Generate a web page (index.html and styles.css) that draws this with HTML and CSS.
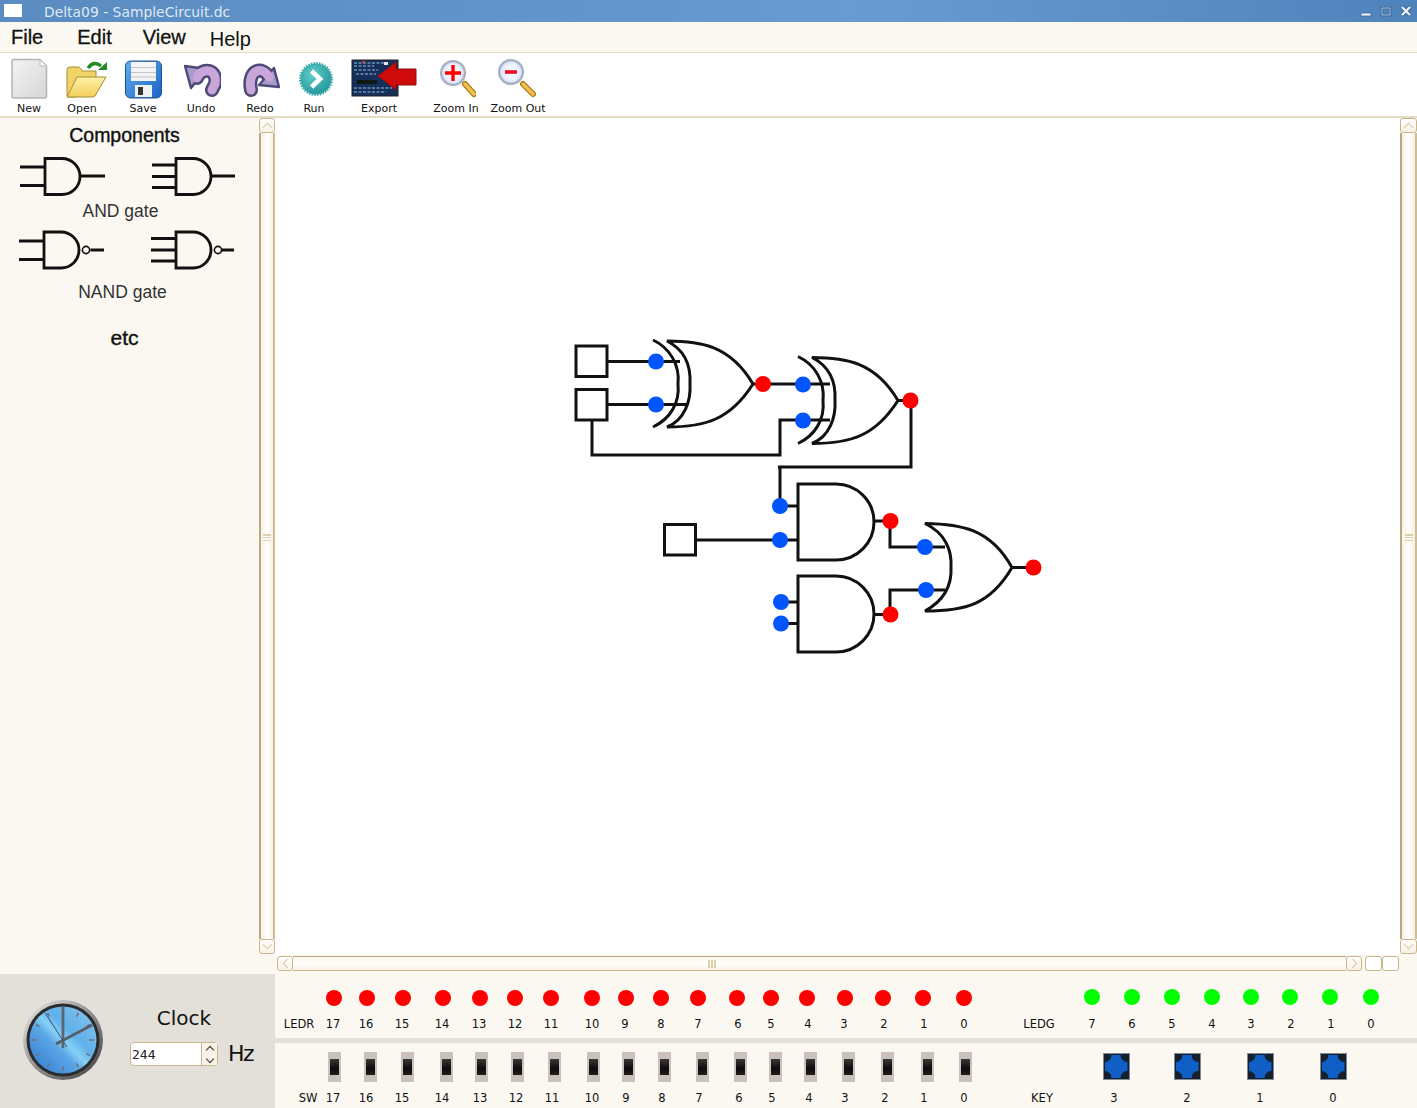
FILE: index.html
```html
<!DOCTYPE html>
<html lang="en">
<head>
  <meta charset="UTF-8" />
  <title>Delta09 - SampleCircuit.dc</title>
  <link rel="stylesheet" href="styles.css">
</head>
<body>
  <div class="titlebar">
    <span class="win-icon"></span>
    <span class="win-title">Delta09 - SampleCircuit.dc</span>
    <svg class="win-buttons" width="60" height="22" viewBox="1357 0 60 22">
      <rect x="1361" y="13" width="10" height="3" rx="1" fill="#e8eef6" stroke="#34618f" stroke-width=".7"/>
      <rect x="1382" y="8" width="8" height="7" fill="none" stroke="#2f5f90" stroke-width="2.6"/>
      <rect x="1382" y="8" width="8" height="7" fill="none" stroke="#d5e2f0" stroke-width=".8"/>
      <path d="M1402 7l8 8M1410 7l-8 8" stroke="#34618f" stroke-width="4"/>
      <path d="M1402 7l8 8M1410 7l-8 8" stroke="#eef3f9" stroke-width="2.4"/>
    </svg>
  </div>

  <div class="menubar">
    <span class="menu-item">File</span>
    <span class="menu-item">Edit</span>
    <span class="menu-item">View</span>
    <span class="menu-item help">Help</span>
  </div>

  <div class="toolbar">
    <div class="tool">
      <svg width="40" height="43" viewBox="9 58 40 43">
        <defs>
          <linearGradient id="paper" x1="0" y1="0" x2="1" y2="1"><stop offset="0" stop-color="#f3f3f3"/><stop offset="1" stop-color="#d6d6d6"/></linearGradient>
        </defs>
        <path d="M14 59.500H40L46.500 66V96a2 2 0 0 1-2 2H14a2 2 0 0 1-2-2V61.500a2 2 0 0 1 2-2Z" fill="url(#paper)" stroke="#b4b4b4" stroke-width="1.500"/>
        <path d="M40 59.500V66H46.500Z" fill="#fff" stroke="#bbb"/>
      </svg>
      <span>New</span>
    </div>
    <div class="tool">
      <svg width="50" height="43" viewBox="57 58 50 43">
        <defs>
          <linearGradient id="folder" x1="0" y1="0" x2="0" y2="1"><stop offset="0" stop-color="#fff2a8"/><stop offset="1" stop-color="#f2cf58"/></linearGradient>
        </defs>
        <path d="M67 96V70q0-3 3-3h8q2 0 3 2l1 2h14v6L76 97H68Z" fill="#f0d468" stroke="#a88e36"/>
        <path d="M67 97L77 77H106L95 96Q94 97 92 97Z" fill="url(#folder)" stroke="#a88e36"/>
        <path d="M88 68Q94 60 101 66" fill="none" stroke="#1f8a1f" stroke-width="3.400"/>
        <path d="M98 70H107V62Z" fill="#1f8a1f"/>
      </svg>
      <span>Open</span>
    </div>
    <div class="tool">
      <svg width="40" height="43" viewBox="123 58 40 43">
        <defs>
          <linearGradient id="disk" x1="0" y1="0" x2="1" y2="1"><stop offset="0" stop-color="#5fb0f5"/><stop offset="1" stop-color="#1c62c4"/></linearGradient>
        </defs>
        <rect x="125.500" y="61" width="36" height="37" rx="5" fill="url(#disk)" stroke="#24508f"/>
        <rect x="131" y="62" width="25" height="19" fill="#f4f4f4"/>
        <path d="M131 67.500H156M131 72.500H156M131 77H156" stroke="#c4c4c4"/>
        <rect x="135" y="85" width="17" height="12" fill="#f0f0f0"/>
        <rect x="138" y="87" width="5" height="8" fill="#333"/>
      </svg>
      <span>Save</span>
    </div>
    <div class="tool">
      <svg width="40" height="43" viewBox="181 58 40 43">
        <path d="M197 78C201 67 218 68 215 84L212 90" fill="none" stroke="#4d4a78" stroke-width="14" stroke-linecap="round"/>
        <path d="M185 66L206 69L191 88Z" fill="#a99acb" stroke="#4d4a78" stroke-width="2.400" stroke-linejoin="round"/>
        <path d="M197 78C201 67 218 68 215 84L212 90" fill="none" stroke="#c9a6da" stroke-width="9" stroke-linecap="round"/>
      </svg>
      <span>Undo</span>
    </div>
    <div class="tool">
      <svg width="40" height="43" viewBox="240 58 40 43">
        <path d="M251 90C247 70 262 65 269 77" fill="none" stroke="#4d4a78" stroke-width="14" stroke-linecap="round"/>
        <path d="M279 87L274 68L259 85Z" fill="#a99acb" stroke="#4d4a78" stroke-width="2.400" stroke-linejoin="round"/>
        <path d="M251 90C247 70 262 65 269 77" fill="none" stroke="#c9a6da" stroke-width="9" stroke-linecap="round"/>
      </svg>
      <span>Redo</span>
    </div>
    <div class="tool">
      <svg width="44" height="43" viewBox="292 58 44 43">
        <defs>
          <radialGradient id="run" cx=".4" cy=".35" r=".75"><stop offset="0" stop-color="#62cfca"/><stop offset="1" stop-color="#1d9096"/></radialGradient>
        </defs>
        <circle cx="316" cy="79" r="15.500" fill="url(#run)" stroke="#3aa9a9" stroke-width="3" stroke-dasharray="1.500 1.200"/>
        <path d="M311.500 71L320 79L311.500 87" fill="none" stroke="#fff" stroke-width="4.600"/>
      </svg>
      <span>Run</span>
    </div>
    <div class="tool">
      <svg width="78" height="43" viewBox="340 58 78 43">
        <rect x="352" y="60" width="46" height="36" fill="#14305a" stroke="#222"/>
        <path d="M354 63H384M354 66H374M354 70H378M356 74H376M354 88H392M354 92H386" stroke="#6f8fb5" stroke-width="1.300" stroke-dasharray="3 1.500"/>
        <rect x="357" y="80" width="20" height="4" fill="#101a14"/>
        <rect x="384" y="62" width="4" height="3" fill="#e7e7e7"/>
        <rect x="362" y="61" width="3" height="2" fill="#c43b3b"/>
        <path d="M378 76L396 62V69H416V85H396V90Z" fill="#cf0a0a" stroke="#8e1010"/>
      </svg>
      <span>Export</span>
    </div>
    <div class="tool">
      <svg width="40" height="43" viewBox="436 58 40 43">
        <defs>
          <radialGradient id="lens" cx=".5" cy=".5" r=".55"><stop offset="0" stop-color="#fff"/><stop offset=".7" stop-color="#e6ecf8"/><stop offset="1" stop-color="#8fa6d8"/></radialGradient>
        </defs>
        <path d="M465 84L474 94" stroke="#a87a1a" stroke-width="6" stroke-linecap="round"/>
        <path d="M465 84L474 94" stroke="#f1bf4c" stroke-width="3.500" stroke-linecap="round"/>
        <circle cx="453" cy="73" r="12" fill="url(#lens)" stroke="#a7aec2" stroke-width="2"/>
        <path d="M453 65V81M445 73H461" stroke="#f00" stroke-width="3.400"/>
      </svg>
      <span>Zoom In</span>
    </div>
    <div class="tool">
      <svg width="44" height="43" viewBox="496 58 44 43">
        <path d="M523 84L533 94" stroke="#a87a1a" stroke-width="6" stroke-linecap="round"/>
        <path d="M523 84L533 94" stroke="#f1bf4c" stroke-width="3.500" stroke-linecap="round"/>
        <circle cx="511" cy="72" r="12" fill="url(#lens)" stroke="#a7aec2" stroke-width="2"/>
        <path d="M505 72H517" stroke="#e8102a" stroke-width="3.600"/>
      </svg>
      <span>Zoom Out</span>
    </div>
  </div>

  <div class="main">
    <aside class="sidebar">
      <h2 class="side-title">Components</h2>
      <svg class="gates" width="259" height="40" viewBox="0 156 259 40">
        <g fill="none" stroke="#111" stroke-width="2.800">
          <path d="M45 158.500H62A18 18 0 0 1 62 194.500H45Z"/>
          <path d="M20 167H45M20 185.500H45M80 176H105"/>
          <path d="M176 158.500H193A18 18 0 0 1 193 194.500H176Z"/>
          <path d="M152 165H176M152 176.500H176M152 187.500H176M211 176H235"/>
        </g>
      </svg>
      <p class="gate-name and">AND gate</p>
      <svg class="gates" width="259" height="40" viewBox="0 230 259 40">
        <g fill="none" stroke="#111" stroke-width="2.800">
          <path d="M44 232H61A18 18 0 0 1 61 268H44Z"/>
          <path d="M19 241H44M19 259.500H44M90.500 250H104"/>
          <circle cx="86" cy="250" r="3.600" stroke-width="1.600"/>
          <path d="M176 232H193A18 18 0 0 1 193 268H176Z"/>
          <path d="M151 238.500H176M151 250H176M151 261H176M222 250H234"/>
          <circle cx="218" cy="250" r="3.600" stroke-width="1.600"/>
        </g>
      </svg>
      <p class="gate-name nand">NAND gate</p>
      <p class="side-more">etc</p>
    </aside>

    <div class="vscroll">
      <span class="sb-btn up"></span>
      <span class="sb-track"><span class="grip"></span></span>
      <span class="sb-btn down"></span>
    </div>

    <div class="canvas">
      <svg width="1125" height="837" viewBox="275 118 1125 837">
        <defs>
          <g id="xor">
            <path d="M653 340C670 348 680 365 678 384C680 403 670 419 653 427"/>
            <path d="M667 341C700 341 730 345 753 384C730 420 705 427 667 427C685 420 691 400 690 384C691 365 685 350 667 341Z"/>
          </g>
          <path id="and" d="M798 484H836A38 38 0 0 1 836 560H798Z"/>
        </defs>
        <g fill="none" stroke="#111" stroke-width="3">
          <rect x="576" y="346" width="31" height="30.500"/>
          <rect x="576" y="389.500" width="31" height="30.500"/>
          <rect x="664.500" y="524.500" width="31" height="30.500"/>
          <use href="#xor"/>
          <use href="#xor" transform="translate(145 16.500)"/>
          <use href="#and"/>
          <use href="#and" transform="translate(0 92)"/>
          <path d="M925 523.500C960 524 990 528 1012 567.500C990 605 965 611 925 611C945 600 952 585 951 567C952 550 945 533 925 523.500Z"/>
          <path d="M607 361.500H680M607 404.500H687M592 420V455H780V420H830M753 384H830M897 400.500H911V467H778M780 467V506"/>
          <path d="M780 506H798M695 540H798M781 602H798M781 623.500H798M874 521H890V547H945M874 614.500H890V590H945M1012 567.500H1033"/>
        </g>
        <g fill="#0055ff">
          <circle cx="656" cy="361.500" r="8"/>
          <circle cx="656" cy="404.500" r="8"/>
          <circle cx="803" cy="384.500" r="8"/>
          <circle cx="803" cy="420.500" r="8"/>
          <circle cx="780" cy="506" r="8"/>
          <circle cx="780" cy="540" r="8"/>
          <circle cx="781" cy="602" r="8"/>
          <circle cx="781" cy="623.500" r="8"/>
          <circle cx="925" cy="547" r="8"/>
          <circle cx="926" cy="590" r="8"/>
        </g>
        <g fill="#ff0000">
          <circle cx="763" cy="384" r="8"/>
          <circle cx="910.500" cy="400.500" r="8"/>
          <circle cx="890.500" cy="521" r="8"/>
          <circle cx="890.500" cy="614.500" r="8"/>
          <circle cx="1033.500" cy="567.500" r="8"/>
        </g>
      </svg>
    </div>

    <div class="vscroll">
      <span class="sb-btn up"></span>
      <span class="sb-track"><span class="grip"></span></span>
      <span class="sb-btn down"></span>
    </div>

    <div class="hscroll-row">
      <div class="hscroll">
        <span class="hb-btn left"></span>
        <span class="hb-track"><span class="grip wide"></span></span>
        <span class="hb-btn right"></span>
      </div>
      <span class="corner"></span>
      <span class="corner"></span>
    </div>
  </div>

  <div class="bottom">
    <div class="clock-panel">
      <svg class="clock" width="84" height="84" viewBox="21 998 84 84">
        <defs>
          <linearGradient id="ring" x1="0" y1="0" x2="1" y2="1"><stop offset="0" stop-color="#ececec"/><stop offset=".45" stop-color="#9a9a9a"/><stop offset="1" stop-color="#3a3a3a"/></linearGradient>
          <linearGradient id="face" x1="0" y1="1" x2="1" y2="0"><stop offset="0" stop-color="#2f76cf"/><stop offset=".4" stop-color="#5aa6e6"/><stop offset=".5" stop-color="#86d0f5"/><stop offset=".62" stop-color="#5fb0ea"/><stop offset="1" stop-color="#8ac6ef"/></linearGradient>
        </defs>
        <circle cx="63" cy="1040" r="40" fill="url(#ring)"/>
        <circle cx="63" cy="1040" r="36.500" fill="#2b2b2b"/>
        <circle cx="63" cy="1040" r="33.500" fill="url(#face)"/>
        <path d="M63 1009V1014M63 1066V1071M32 1040H37M89 1040H94M47.500 1013l2 3.500M78.500 1013l-2 3.500M47.500 1067l2-3.500M78.500 1067l-2-3.500M36 1024.500l3.500 2M90 1024.500l-3.500 2M36 1055.500l3.500-2M90 1055.500l-3.500-2" stroke="#6a7480" stroke-width="1.600"/>
        <path d="M45 1012.500L67 1047" stroke="#33506e" stroke-width="1"/>
        <path d="M63 1007V1048" stroke="#5b6470" stroke-width="2.800"/>
        <path d="M56 1044L92 1025" stroke="#555e68" stroke-width="2.800"/>
      </svg>
      <div class="clock-controls">
        <p class="clock-label">Clock</p>
        <div class="clock-rate">
          <div class="spin">
            <input class="spin-input" type="text" value="244">
            <div class="spin-btns">
              <span class="spin-btn up"></span>
              <span class="spin-btn down"></span>
            </div>
          </div>
          <span class="hz">Hz</span>
        </div>
      </div>
    </div>

    <div class="board">
      <div class="board-top">
        <div class="pins led-row">
          <span class="pin"><i class="led"></i></span><span class="pin"><i class="led"></i></span><span class="pin"><i class="led"></i></span><span class="pin"><i class="led"></i></span><span class="pin"><i class="led"></i></span><span class="pin"><i class="led"></i></span><span class="pin"><i class="led"></i></span><span class="pin"><i class="led"></i></span><span class="pin"><i class="led"></i></span><span class="pin"><i class="led"></i></span><span class="pin"><i class="led"></i></span><span class="pin"><i class="led"></i></span><span class="pin"><i class="led"></i></span><span class="pin"><i class="led"></i></span><span class="pin"><i class="led"></i></span><span class="pin"><i class="led"></i></span><span class="pin"><i class="led"></i></span><span class="pin"><i class="led"></i></span>
          <span class="pin"><i class="led green"></i></span><span class="pin"><i class="led green"></i></span><span class="pin"><i class="led green"></i></span><span class="pin"><i class="led green"></i></span><span class="pin"><i class="led green"></i></span><span class="pin"><i class="led green"></i></span><span class="pin"><i class="led green"></i></span><span class="pin"><i class="led green"></i></span>
        </div>
        <div class="pins led-labels">
          <span class="pin">LEDR</span><span class="pin">17</span><span class="pin">16</span><span class="pin">15</span><span class="pin">14</span><span class="pin">13</span><span class="pin">12</span><span class="pin">11</span><span class="pin">10</span><span class="pin">9</span><span class="pin">8</span><span class="pin">7</span><span class="pin">6</span><span class="pin">5</span><span class="pin">4</span><span class="pin">3</span><span class="pin">2</span><span class="pin">1</span><span class="pin">0</span>
          <span class="pin">LEDG</span><span class="pin">7</span><span class="pin">6</span><span class="pin">5</span><span class="pin">4</span><span class="pin">3</span><span class="pin">2</span><span class="pin">1</span><span class="pin">0</span>
        </div>
      </div>
      <div class="board-bottom">
        <div class="pins switch-row">
          <span class="pin"><i class="switch"></i></span><span class="pin"><i class="switch"></i></span><span class="pin"><i class="switch"></i></span><span class="pin"><i class="switch"></i></span><span class="pin"><i class="switch"></i></span><span class="pin"><i class="switch"></i></span><span class="pin"><i class="switch"></i></span><span class="pin"><i class="switch"></i></span><span class="pin"><i class="switch"></i></span><span class="pin"><i class="switch"></i></span><span class="pin"><i class="switch"></i></span><span class="pin"><i class="switch"></i></span><span class="pin"><i class="switch"></i></span><span class="pin"><i class="switch"></i></span><span class="pin"><i class="switch"></i></span><span class="pin"><i class="switch"></i></span><span class="pin"><i class="switch"></i></span><span class="pin"><i class="switch"></i></span>
          <span class="pin"><i class="key"></i></span><span class="pin"><i class="key"></i></span><span class="pin"><i class="key"></i></span><span class="pin"><i class="key"></i></span>
        </div>
        <div class="pins switch-labels">
          <span class="pin">SW</span><span class="pin">17</span><span class="pin">16</span><span class="pin">15</span><span class="pin">14</span><span class="pin">13</span><span class="pin">12</span><span class="pin">11</span><span class="pin">10</span><span class="pin">9</span><span class="pin">8</span><span class="pin">7</span><span class="pin">6</span><span class="pin">5</span><span class="pin">4</span><span class="pin">3</span><span class="pin">2</span><span class="pin">1</span><span class="pin">0</span>
          <span class="pin">KEY</span><span class="pin">3</span><span class="pin">2</span><span class="pin">1</span><span class="pin">0</span>
        </div>
      </div>
    </div>
  </div>
</body>
</html>
```

FILE: styles.css
```css
* {
  box-sizing: border-box;
}
html, body {
  margin: 0;
  height: 100%;
  overflow: hidden;
}
body {
  font-family: "DejaVu Sans", sans-serif;
  background: #fbf8f1;
  color: #111;
}

/* window chrome */
.titlebar {
  height: 22px;
  display: flex;
  align-items: center;
  padding-left: 4px;
  background: linear-gradient(90deg, #5a8bc1 0%, #6496cb 45%, #6a9bd0 60%, #4f83bc 100%);
}
.win-icon {
  width: 18px;
  height: 13px;
  margin-top: -2px;
  background: #fff;
}
.win-title {
  margin-left: 22px;
  padding-top: 2px;
  font-size: 13.9px;
  color: #dfe9f5;
}
.win-buttons {
  margin-left: auto;
}

.menubar {
  height: 31px;
  display: flex;
  font-family: "Liberation Sans", sans-serif;
  font-size: 20px;
  line-height: 30px;
  padding-left: 11px;
  background: #fbf8f1;
  border-bottom: 1px solid #e6dcc6;
  -webkit-text-stroke: 0.3px #111;
}
.menu-item {
  margin-right: 34px;
}
.menu-item:nth-child(2) {
  margin-right: 31px;
}
.menu-item:nth-child(3) {
  margin-right: 24px;
}
.menu-item.help {
  padding-top: 2px;
  -webkit-text-stroke: 0;
}

/* the tracks are the distances between neighbouring tool centres */
.toolbar {
  height: 65px;
  display: grid;
  grid-template-columns: 53px 61px 58px 59px 54px 65px 77px 62px 20px;
  padding: 5px 0 0 29px;
  background: #fff;
  border-bottom: 2px solid #e6dcc6;
}
.tool {
  width: 0;
  display: flex;
  flex-direction: column;
  align-items: center;
  font-size: 11px;
  line-height: 13px;
  white-space: nowrap;
}
.tool svg {
  flex: none;
}
.tool span {
  margin-top: 1px;
}

/* middle area */
.main {
  height: 856px;
  display: grid;
  grid-template-columns: 259px 16px 1fr 17px;
  grid-template-rows: 837px 19px;
}
.sidebar {
  grid-row: 1 / 3;
  font-family: "Liberation Sans", sans-serif;
  background: #fbf8f1;
}
.side-title {
  margin: 0;
  width: 249px;
  height: 38px;
  padding-top: 5px;
  font-size: 19.5px;
  line-height: 24px;
  font-weight: normal;
  text-align: center;
  -webkit-text-stroke: 0.4px #111;
}
.gates {
  display: block;
}
.gate-name {
  margin: 0;
  font-size: 17.5px;
  line-height: 22px;
  text-align: center;
  color: #333;
}
.gate-name.and {
  width: 241px;
  height: 34px;
  padding-top: 4px;
}
.gate-name.nand {
  width: 245px;
  height: 55px;
  padding-top: 11px;
}
.side-more {
  margin: 0;
  width: 249px;
  padding-top: 1px;
  font-size: 21px;
  line-height: 24px;
  text-align: center;
  -webkit-text-stroke: 0.4px #111;
}
.canvas {
  background: #fff;
}
.canvas svg {
  display: block;
}

/* scrollbars */
.vscroll {
  display: flex;
  flex-direction: column;
  height: 836px;
}
.sb-btn, .hb-btn, .corner {
  flex: none;
  display: flex;
  align-items: center;
  justify-content: center;
  background: linear-gradient(#fff, #f6f1e4);
  border: 1.5px solid #c9b78c;
  border-radius: 3px;
}
.sb-btn {
  height: 15px;
}
.hb-btn {
  width: 16px;
}
.sb-btn::before, .hb-btn::before {
  content: "";
  width: 6px;
  height: 6px;
  border-top: 1.5px solid #d8cba8;
  border-left: 1.5px solid #d8cba8;
}
.sb-btn.up::before { transform: translateY(2px) rotate(45deg); }
.sb-btn.down::before { transform: translateY(-2px) rotate(225deg); }
.hb-btn.left::before { transform: translateX(2px) rotate(-45deg); }
.hb-btn.right::before { transform: translateX(-2px) rotate(135deg); }
.sb-track {
  flex: 1;
  display: flex;
  align-items: center;
  justify-content: center;
  padding-top: 4px;
  background: linear-gradient(90deg, #f6f1e4, #fffefb 55%, #f5f0e2);
  border-left: 2px solid #b9a77e;
  border-right: 2px solid #cdbd95;
}
.grip {
  width: 8px;
  height: 8px;
  background: repeating-linear-gradient(#dccfa9 0 1.5px, transparent 1.5px 3px);
}
.grip.wide {
  background: repeating-linear-gradient(90deg, #dccfa9 0 1.5px, transparent 1.5px 3px);
}
.hscroll-row {
  grid-column: 3 / 5;
  display: flex;
  height: 19px;
  padding: 1px 18px 3px 2px;
  background: #fbf8f1;
}
.hscroll {
  flex: 1;
  display: flex;
  margin-right: 3px;
}
.hb-track {
  flex: 1;
  display: flex;
  align-items: center;
  justify-content: center;
  padding-right: 216px;
  background: linear-gradient(#f8f4e9, #fffefb 50%, #f5f0e2);
  border-top: 1.5px solid #b9a77e;
  border-bottom: 1.5px solid #c9b78c;
}
.corner {
  width: 17px;
  background: #fff;
}

/* clock and board */
.bottom {
  height: 134px;
  display: grid;
  grid-template-columns: 275px 1fr;
}
.clock-panel {
  display: flex;
  padding: 24px 0 0 21px;
  background: #e3e0da;
}
.clock {
  flex: none;
}
.clock-controls {
  margin-left: 25px;
  padding-top: 8px;
}
.clock-label {
  margin: 0;
  width: 108px;
  font-size: 20px;
  line-height: 24px;
  text-align: center;
}
.clock-rate {
  display: flex;
  align-items: center;
  margin-top: 12px;
}
.spin {
  width: 88px;
  height: 24px;
  display: flex;
  background: #fff;
  border: 1.5px solid #c9b78c;
  border-radius: 4px;
}
.spin-input {
  width: 70px;
  border: 0;
  padding: 0 1px;
  font-family: "DejaVu Sans Mono", monospace;
  font-size: 13px;
  background: transparent;
  color: #222;
  outline: none;
}
.spin-btns {
  flex: 1;
  display: flex;
  flex-direction: column;
  border-left: 1.5px solid #c9b78c;
  background: #f8f3e6;
}
.spin-btn {
  flex: 1;
  display: flex;
  align-items: center;
  justify-content: center;
}
.spin-btn::before {
  content: "";
  width: 5px;
  height: 5px;
  border-top: 1.3px solid #333;
  border-left: 1.3px solid #333;
}
.spin-btn.up::before { transform: translateY(1px) rotate(45deg); }
.spin-btn.down::before { transform: translateY(-1px) rotate(225deg); }
.hz {
  margin-left: 10px;
  font-size: 22px;
  line-height: 24px;
  letter-spacing: -1.5px;
}

.board {
  display: flex;
  flex-direction: column;
  background: #fbf8f1;
}
.board-top {
  height: 69px;
  padding-top: 16px;
  border-bottom: 5px solid #e3e0da;
}
.board-bottom {
  padding-top: 10px;
}
.pins {
  display: grid;
  font-size: 11.5px;
  line-height: 14px;
  white-space: nowrap;
}
.pin {
  width: 0;
  display: flex;
  justify-content: center;
}
/* the tracks are the distances between neighbouring pin centres */
.led-row {
  height: 27px;
  padding-left: 59px;
  grid-template-columns: 33px 36px 40px 37px 35px 36px 41px 34px 35px 37px 39px 34px 36px 38px 38px 40px 41px 128px 40px 40px 40px 39px 39px 40px 41px 20px;
}
.led-labels {
  padding-left: 24px;
  grid-template-columns: 34px 33px 36px 40px 37px 36px 36px 41px 33px 36px 37px 40px 33px 37px 36px 40px 40px 40px 75px 53px 40px 40px 40px 39px 40px 40px 40px 20px;
}
.switch-row {
  height: 38px;
  padding-left: 59px;
  grid-template-columns: 36px 37px 39px 35px 36px 37px 39px 35px 36px 38px 38px 35px 35px 38px 39px 40px 38px 151px 71px 73px 73px 20px;
}
.switch-labels {
  padding-left: 33px;
  grid-template-columns: 25px 33px 36px 40px 38px 36px 36px 40px 34px 36px 37px 40px 33px 37px 36px 40px 39px 40px 78px 72px 73px 73px 73px 20px;
}
.led {
  flex: none;
  width: 16px;
  height: 16px;
  border-radius: 50%;
  background: #ff0000;
}
.led.green {
  margin-top: -1.5px;
  background: #00ff00;
}
.switch {
  flex: none;
  width: 13px;
  height: 30px;
  margin-top: -1px;
  display: flex;
  align-items: center;
  justify-content: center;
  background: #cbc1bc;
}
.switch::before {
  content: "";
  width: 9px;
  height: 16px;
  background: linear-gradient(#3a3836, #0c0c0c 60%, #211f1e);
}
.key {
  flex: none;
  width: 27px;
  height: 27px;
  display: flex;
  align-items: center;
  justify-content: center;
  background: #15202c;
  border: 1px solid #7f8a96;
}
.key::before {
  content: "";
  width: 23px;
  height: 23px;
  background: #0f5fc6;
  clip-path: polygon(30% 0, 70% 0, 72% 14%, 86% 28%, 100% 30%, 100% 70%, 86% 72%, 72% 86%, 70% 100%, 30% 100%, 28% 86%, 14% 72%, 0 70%, 0 30%, 14% 28%, 28% 14%);
}
```
